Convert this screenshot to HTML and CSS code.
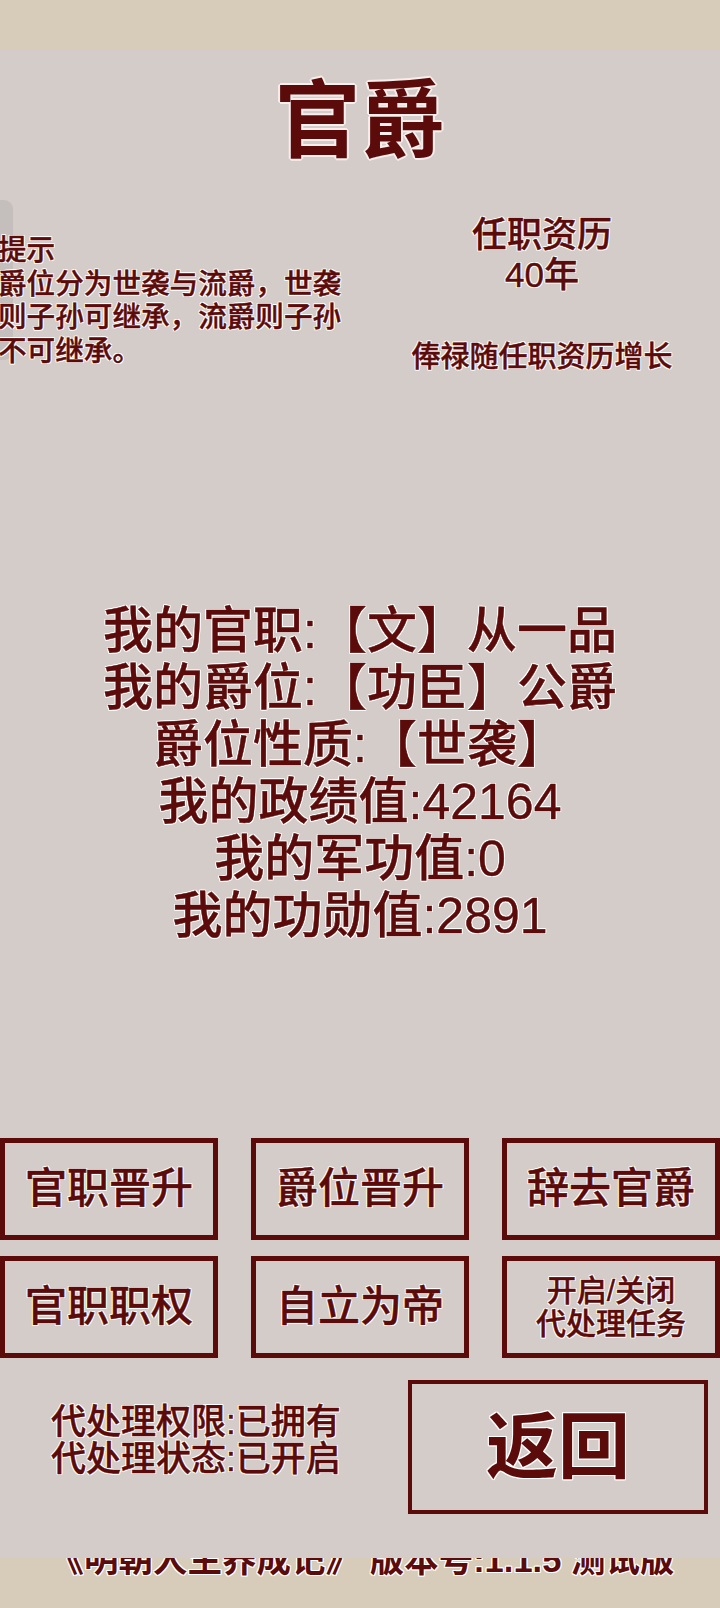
FILE: index.html
```html
<!DOCTYPE html>
<html lang="zh-CN">
<head>
<meta charset="utf-8">
<title>官爵</title>
<link rel="stylesheet" href="styles.css">
</head>
<body>
<div class="topbar"></div>
<main class="panel">
  <div class="scroll-thumb"></div>
  <h1 class="title">官爵</h1>
  <section class="info">
    <div class="tip">提示<br>爵位分为世袭与流爵，世袭<br>则子孙可继承，流爵则子孙<br>不可继承。</div>
    <div class="tenure-col">
      <div class="tenure">任职资历<br>40年</div>
      <div class="salary">俸禄随任职资历增长</div>
    </div>
  </section>
  <section class="stats">
    <div>我的官职:【文】从一品</div>
    <div>我的爵位:【功臣】公爵</div>
    <div>爵位性质:【世袭】</div>
    <div>我的政绩值:42164</div>
    <div>我的军功值:0</div>
    <div>我的功勋值:2891</div>
  </section>
  <section class="actions">
    <div class="btn">官职晋升</div>
    <div class="btn">爵位晋升</div>
    <div class="btn">辞去官爵</div>
    <div class="btn">官职职权</div>
    <div class="btn">自立为帝</div>
    <div class="btn btn-small">开启/关闭<br>代处理任务</div>
  </section>
  <section class="bottom">
    <div class="status">代处理权限:已拥有<br>代处理状态:已开启</div>
    <div class="return-btn">返回</div>
  </section>
</main>
<footer class="footer"><div class="footer-text">《明朝人生养成记》 版本号:1.1.5 测试版</div></footer>
</body>
</html>
```
FILE: styles.css
```css
html, body {
  margin: 0;
  padding: 0;
}
body {
  width: 720px;
  height: 1608px;
  overflow: hidden;
  background: #d7cbba;
  font-family: "Liberation Sans", "Noto Sans CJK SC", sans-serif;
  font-weight: 500;
  color: #5c0b0b;
  -webkit-text-stroke: 0.45px #5c0b0b;
  text-shadow:
    1px 0 0 #fff, -1px 0 0 #fff, 0 1px 0 #fff, 0 -1px 0 #fff,
    1px 1px 0 #fff, -1px -1px 0 #fff, 1px -1px 0 #fff, -1px 1px 0 #fff;
}
.topbar {
  height: 50px;
}
.panel {
  position: relative;
  height: 1508px;
  background: #d4ccc8;
  overflow: hidden;
}
.scroll-thumb {
  position: absolute;
  left: 0;
  top: 150px;
  width: 13px;
  height: 160px;
  background: #c4bfbc;
  border-radius: 0 9px 9px 0;
}
.title {
  margin: 30px 0 0;
  font-size: 85px;
  line-height: 84px;
  font-weight: 700;
  -webkit-text-stroke: 0;
  text-align: center;
  text-shadow:
    2px 0 0 #f6efee, -2px 0 0 #f6efee, 0 2px 0 #f6efee, 0 -2px 0 #f6efee,
    1px 1px 0 #f6efee, -1px -1px 0 #f6efee, 1px -1px 0 #f6efee, -1px 1px 0 #f6efee;
}
.info {
  margin-top: 51px;
  display: grid;
  grid-template-columns: 392px 300px;
}
.tip {
  position: relative;
  margin: 19px 0 0 -2px;
  font-size: 28.6px;
  line-height: 33.5px;
  white-space: nowrap;
}
.tenure-col {
  text-align: center;
}
.tenure {
  font-size: 35px;
  line-height: 40px;
}
.salary {
  margin-top: 45px;
  font-size: 29px;
  line-height: 34px;
  white-space: nowrap;
}
.stats {
  margin-top: 229px;
  font-size: 50px;
  line-height: 57px;
  text-align: center;
  white-space: nowrap;
}
.actions {
  margin-top: 193px;
  display: grid;
  grid-template-columns: repeat(3, 218px);
  grid-auto-rows: 102px;
  column-gap: 33px;
  row-gap: 16px;
}
.btn {
  box-sizing: border-box;
  border: 5px solid #5c0b0b;
  display: flex;
  align-items: center;
  justify-content: center;
  text-align: center;
  font-size: 42px;
  line-height: 48px;
  white-space: nowrap;
}
.btn-small {
  font-size: 30px;
  line-height: 33px;
}
.bottom {
  margin-top: 22px;
  display: flex;
}
.status {
  margin: 23px 0 0 51px;
  font-size: 35px;
  line-height: 37px;
  white-space: nowrap;
}
.return-btn {
  box-sizing: border-box;
  margin-left: auto;
  margin-right: 12px;
  width: 300px;
  height: 134px;
  border: 4px solid #5c0b0b;
  display: flex;
  align-items: center;
  justify-content: center;
  font-size: 72px;
  font-weight: 700;
  -webkit-text-stroke: 0;
  line-height: 80px;
}
.footer {
  height: 50px;
  overflow: hidden;
}
.footer-text {
  margin-top: -15px;
  padding-left: 4px;
  font-size: 34.5px;
  line-height: 34px;
  font-weight: 700;
  -webkit-text-stroke: 0;
  text-align: center;
  white-space: nowrap;
}
```
